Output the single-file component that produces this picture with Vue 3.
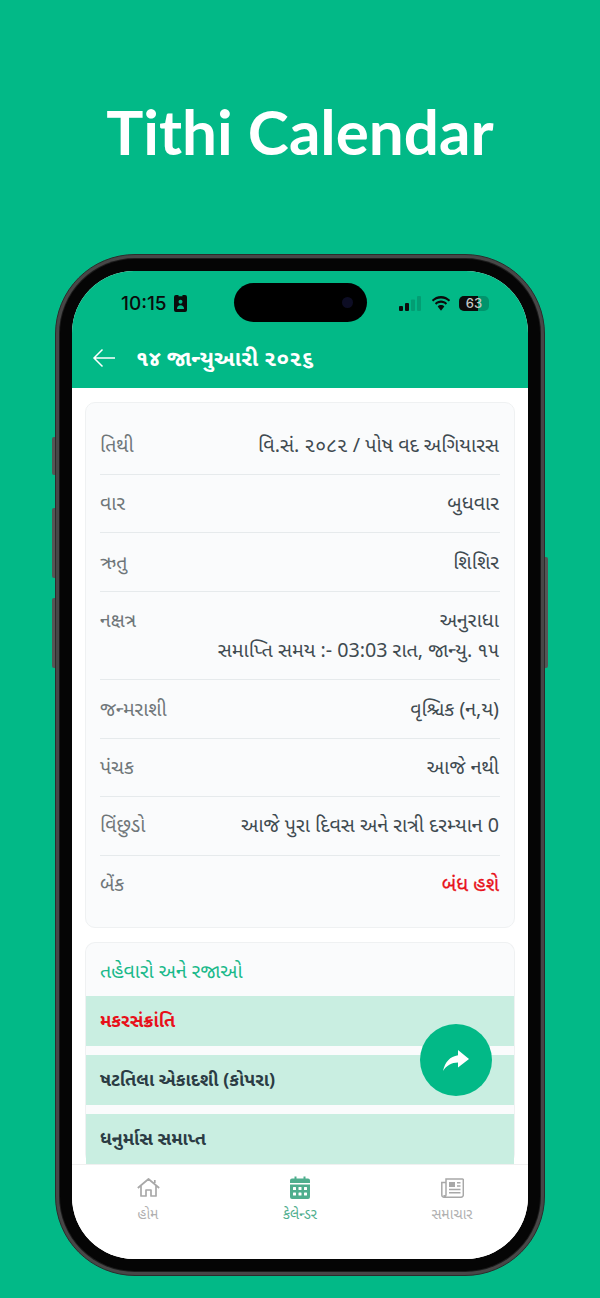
<template>
  <div class="page">
    <h1 class="headline">Tithi Calendar</h1>

    <div class="phone">
      <span class="side-btn mute"></span>
      <span class="side-btn vol-up"></span>
      <span class="side-btn vol-down"></span>
      <span class="side-btn power"></span>

      <div class="bezel">
        <div class="screen">
          <div class="island"><span class="lens"></span></div>

          <header class="top">
            <div class="status">
              <div class="status-left">
                <span class="time">10:15</span>
                <svg class="focus" width="13" height="17" viewBox="0 0 13 17">
                  <path d="M2 0h2.500v1.200h4V0H11a2 2 0 0 1 2 2v13a2 2 0 0 1-2 2H2a2 2 0 0 1-2-2V2a2 2 0 0 1 2-2z" fill="#0b0b0b" />
                  <circle cx="6.500" cy="6.800" r="2" fill="#02b987" />
                  <path d="M3 14c0-2.600 1.400-3.800 3.500-3.800S10 11.400 10 14z" fill="#02b987" />
                </svg>
              </div>
              <div class="status-right">
                <svg width="23" height="15" viewBox="0 0 23 15">
                  <rect x="0" y="10" width="4" height="5" rx="1" fill="#0b0b0b" />
                  <rect x="6" y="7" width="4" height="8" rx="1" fill="#0b0b0b" />
                  <rect x="12" y="3.500" width="4" height="11.500" rx="1" fill="#0b0b0b" fill-opacity=".16" />
                  <rect x="18" y="0" width="4" height="15" rx="1" fill="#0b0b0b" fill-opacity=".16" />
                </svg>
                <svg width="20" height="15" viewBox="0 0 20 15">
                  <path d="M10 2.400c3 0 5.800 1.200 7.800 3.200l1.400-1.500C16.800 1.600 13.500 0 10 0S3.200 1.600.8 4.100l1.400 1.500c2-2 4.800-3.200 7.800-3.200z" fill="#0b0b0b" />
                  <path d="M10 6.800c1.800 0 3.400.7 4.700 1.900l1.400-1.500C14.500 5.600 12.300 4.600 10 4.600S5.500 5.600 3.900 7.200l1.400 1.500C6.600 7.500 8.200 6.800 10 6.800z" fill="#0b0b0b" />
                  <path d="M10 9c-1.300 0-2.500.5-3.300 1.400L10 14.800l3.300-4.400C12.500 9.500 11.300 9 10 9z" fill="#0b0b0b" />
                </svg>
                <div class="battery">
                  <span class="battery-fill"></span>
                  <span class="battery-num">63</span>
                </div>
              </div>
            </div>
            <div class="appbar">
              <svg class="back" width="24" height="20" viewBox="0 0 24 20">
                <path d="M23 10H2M10.500 1.500 2 10l8.500 8.500" fill="none" stroke="#fff" stroke-width="1.500" />
              </svg>
              <span class="appbar-title">૧૪ જાન્યુઆરી ૨૦૨૬</span>
            </div>
          </header>

          <main class="content">
            <section class="card details">
              <div v-for="row in rows" :key="row.label" class="row">
                <span class="label">{{ row.label }}</span>
                <span class="value" :class="{ red: row.red }">
                  <span v-for="line in row.lines" :key="line" class="line">{{ line }}</span>
                </span>
              </div>
            </section>

            <section class="card festivals">
              <div class="card-title">તહેવારો અને રજાઓ</div>
              <div class="fest-list">
                <div v-for="f in festivals" :key="f.name" class="fest" :class="{ red: f.red }">{{ f.name }}</div>
              </div>
            </section>
          </main>

          <button class="fab" aria-label="share">
            <svg width="26" height="21" viewBox="0 0 26 21">
              <path d="M15 0 26 9 15 17.500v-5C8.500 12.500 3.500 15.500 0 21 2 12 7 6.500 15 5.300z" fill="#fff" />
            </svg>
          </button>

          <nav class="tabs">
            <div class="tab">
              <span class="tab-icon">
                <svg width="23" height="19" viewBox="0 0 23 19">
                  <path d="M.8 10 11.500 1l10.700 9M4 7.500V18h5v-6h5v6h5V7.500M17.800 5V2" fill="none" stroke="#a8a8a8" stroke-width="1.700" stroke-linejoin="round" />
                </svg>
              </span>
              <span>હોમ</span>
            </div>
            <div class="tab active">
              <span class="tab-icon">
                <svg width="20" height="23" viewBox="0 0 20 23">
                  <path d="M2 2.500h2.500V0.500h2V2.500h7V0.500h2V2.500H18a2 2 0 0 1 2 2V7H0V4.500a2 2 0 0 1 2-2zM0 8.500h20V21a2 2 0 0 1-2 2H2a2 2 0 0 1-2-2z" fill="#4fae8e" />
                  <g fill="#fff">
                    <rect x="3" y="11" width="3" height="3" rx=".5" /><rect x="8.500" y="11" width="3" height="3" rx=".5" /><rect x="14" y="11" width="3" height="3" rx=".5" />
                    <rect x="3" y="16.500" width="3" height="3" rx=".5" /><rect x="8.500" y="16.500" width="3" height="3" rx=".5" /><rect x="14" y="16.500" width="3" height="3" rx=".5" />
                  </g>
                </svg>
              </span>
              <span>કેલેન્ડર</span>
            </div>
            <div class="tab">
              <span class="tab-icon">
                <svg width="23" height="20" viewBox="0 0 23 20">
                  <path d="M5 1h16.500a.8.800 0 0 1 .8.800V17a2.200 2.200 0 0 1-2.200 2.200H3A2.200 2.200 0 0 1 .8 17V4.500H5zM5 4v13a1 1 0 0 1-2 0" fill="none" stroke="#a8a8a8" stroke-width="1.500" />
                  <rect x="8" y="4" width="6" height="5" fill="#a8a8a8" />
                  <path d="M16 4.800h3.500M16 8h3.500M8 11.500h11.500M8 14.800h11.500" stroke="#a8a8a8" stroke-width="1.500" />
                </svg>
              </span>
              <span>સમાચાર</span>
            </div>
          </nav>
        </div>
      </div>
    </div>
  </div>
</template>

<script setup>
const rows = [
  { label: 'તિથી', lines: ['વિ.સં. ૨૦૮૨ / પોષ વદ અગિયારસ'] },
  { label: 'વાર', lines: ['બુધવાર'] },
  { label: 'ઋતુ', lines: ['શિશિર'] },
  { label: 'નક્ષત્ર', lines: ['અનુરાધા', 'સમાપ્તિ સમય :- 03:03 રાત, જાન્યુ. ૧૫'] },
  { label: 'જન્મરાશી', lines: ['વૃશ્ચિક (ન,ય)'] },
  { label: 'પંચક', lines: ['આજે નથી'] },
  { label: 'વિંછુડો', lines: ['આજે પુરા દિવસ અને રાત્રી દરમ્યાન 0'] },
  { label: 'બેંક', lines: ['બંધ હશે'], red: true }
]

const festivals = [
  { name: 'મકરસંક્રાંતિ', red: true },
  { name: 'ષટતિલા એકાદશી (કોપરા)' },
  { name: 'ધનુર્માસ સમાપ્ત' }
]
</script>

<style>
html, body { margin: 0; background: #02b987; }
</style>

<style scoped>
.page {
  width: 600px;
  height: 1298px;
  box-sizing: border-box;
  overflow: hidden;
  background: #02b987;
  font-family: "Noto Sans", "Noto Sans Gujarati", "Lato", sans-serif;
}
.headline {
  height: 254px;
  box-sizing: border-box;
  margin: 0;
  padding-top: 92px;
  text-align: center;
  color: #fff;
  font-family: Lato, sans-serif;
  font-size: 62px;
  line-height: 78px;
  font-weight: 700;
}
.phone {
  position: relative;
  width: 490px;
  height: 1022px;
  margin: 0 auto;
  box-sizing: border-box;
  padding: 4px;
  border: 1px solid #2c2c2c;
  border-radius: 80px;
  background: #474747;
}
.side-btn {
  position: absolute;
  width: 3px;
  background: #555;
  border-radius: 2px 0 0 2px;
}
.mute { left: -4px; top: 182px; height: 38px; }
.vol-up { left: -4px; top: 253px; height: 70px; }
.vol-down { left: -4px; top: 343px; height: 70px; }
.power { right: -4px; top: 302px; height: 111px; border-radius: 0 2px 2px 0; }
.bezel {
  height: 100%;
  box-sizing: border-box;
  padding: 12px;
  border-radius: 75px;
  background: #050505;
  box-shadow: 0 0 0 1px #1c1c1c;
}
.screen {
  position: relative;
  height: 100%;
  display: flex;
  flex-direction: column;
  overflow: hidden;
  border-radius: 62px;
  background: #fff;
}
.island {
  position: absolute;
  top: 12px;
  left: 162px;
  width: 133px;
  height: 39px;
  border-radius: 20px;
  background: #000;
}
.lens {
  position: absolute;
  right: 14px;
  top: 14px;
  width: 11px;
  height: 11px;
  border-radius: 50%;
  background: #0d0d24;
}
.top {
  height: 117px;
  flex: none;
  background: #02b987;
  color: #fff;
}
.status {
  height: 64px;
  box-sizing: border-box;
  padding: 19px 39px 0 49px;
  display: flex;
  justify-content: space-between;
  align-items: flex-start;
}
.status-left { display: flex; align-items: center; gap: 7px; height: 26px; }
.time {
  color: #0b0b0b;
  font-family: Inter, sans-serif;
  font-size: 19px;
  font-weight: 500;
}
.status-right { display: flex; align-items: center; gap: 9px; height: 26px; }
.battery {
  position: relative;
  width: 30px;
  height: 15px;
  margin-left: -1px;
  border-radius: 5px;
  overflow: hidden;
  background: rgba(0, 0, 0, 0.2);
}
.battery-fill {
  position: absolute;
  left: 0;
  top: 0;
  bottom: 0;
  width: 63%;
  background: #0b0b0b;
}
.battery-num {
  position: absolute;
  inset: 0;
  text-align: center;
  color: #c4c9c6;
  font-family: Inter, sans-serif;
  font-size: 13px;
  font-weight: 500;
  line-height: 15px;
}
.appbar {
  display: flex;
  align-items: center;
  gap: 20px;
  height: 46px;
  padding-left: 20px;
}
.appbar-title { font-size: 22px; font-weight: 700; }
.content {
  flex: 1;
  min-height: 0;
  overflow: hidden;
  box-sizing: border-box;
  padding: 14px 13px 0;
  display: flex;
  flex-direction: column;
  gap: 14px;
}
.card {
  flex: none;
  border: 1px solid #eff1f2;
  border-radius: 10px;
  background: #fafbfc;
}
.details { height: 526px; box-sizing: border-box; padding: 13.400px 14px 13px; }
.row {
  display: flex;
  justify-content: space-between;
  padding: 15.200px 0 16.300px;
  border-bottom: 1px solid #e6eaec;
  font-size: 19.500px;
  line-height: 26px;
}
.row:last-child { border-bottom: none; }
.label { color: #6f7679; }
.value {
  display: flex;
  flex-direction: column;
  align-items: flex-end;
  gap: 4px;
  padding-right: 1px;
  color: #3f4a50;
  font-size: 19.700px;
}
.value.red { color: #e8141c; font-weight: 400; -webkit-text-stroke: 0.3px #e8141c; }
.festivals { border-bottom: none; }
.card-title {
  padding: 14px 14px 11px;
  color: #19b98a;
  font-size: 19.500px;
  line-height: 28px;
}
.fest-list { display: flex; flex-direction: column; gap: 9px; }
.fest {
  height: 50px;
  display: flex;
  align-items: center;
  padding: 0 14px;
  background: #c9eee1;
  color: #2b3c44;
  font-size: 18px;
  font-weight: 700;
}
.fest.red { color: #e8101a; }
.fab {
  position: absolute;
  left: 348px;
  top: 753px;
  width: 72px;
  height: 72px;
  padding: 0;
  display: flex;
  align-items: center;
  justify-content: center;
  border: none;
  border-radius: 50%;
  background: #02b987;
}
.tabs {
  position: relative;
  height: 95px;
  box-sizing: border-box;
  flex: none;
  display: grid;
  grid-template-columns: repeat(3, 1fr);
  border-top: 1px solid #f0f0f0;
  background: #fff;
}
.tab {
  display: flex;
  flex-direction: column;
  align-items: center;
  gap: 6px;
  padding-top: 11px;
  color: #b0b0b0;
  font-size: 14px;
  line-height: 18px;
}
.tab-icon { height: 23px; display: flex; align-items: center; }
.tab.active { color: #4fae8e; }
</style>
